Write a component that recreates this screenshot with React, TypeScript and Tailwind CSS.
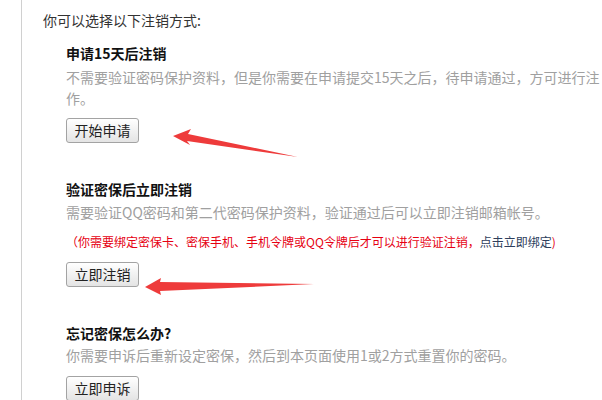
import React from "react";

const font = { fontFamily: '"Noto Sans CJK SC", "Noto Sans", sans-serif' };

function Btn({ children }: { children: React.ReactNode }) {
  return (
    <button className="w-[73px] h-[25px] border border-[#a3a3a3] rounded-[3px] bg-gradient-to-b from-[#ffffff] to-[#e4e4e4] text-[14px] leading-[23px] text-[#222] flex items-center justify-center">
      {children}
    </button>
  );
}

export default function App() {
  return (
    <div className="relative w-[602px] h-[400px] overflow-hidden bg-white" style={font}>
      <div className="ml-[21px] h-full border-l border-[#d0d0d0] pl-[21px] pt-[10px]">
        <div className="text-[14px] leading-[20px] text-[#333]">你可以选择以下注销方式:</div>

        <div className="pl-[23px] pt-[13px]">
          <div className="text-[14px] leading-[20px] font-bold text-[#111]">申请15天后注销</div>
          <div className="mt-[4px] text-[14px] leading-[21px] text-[#a0a0a0] pr-[2px]">
            不需要验证密码保护资料，但是你需要在申请提交15天之后，待申请通过，方可进行注作。
          </div>
          <div className="mt-[9px]">
            <Btn>开始申请</Btn>
          </div>

          <div className="mt-[36px] text-[14px] leading-[20px] font-bold text-[#111]">验证密保后立即注销</div>
          <div className="mt-[3px] text-[14px] leading-[21px] text-[#a0a0a0]">
            需要验证QQ密码和第二代密码保护资料，验证通过后可以立即注销邮箱帐号。
          </div>
          <div className="mt-[10px] text-[12px] leading-[18px] text-[#e60012]">
            （你需要绑定密保卡、密保手机、手机令牌或QQ令牌后才可以进行验证注销，
            <span className="text-[#2e3e5c]">点击立即绑定</span>)
          </div>
          <div className="mt-[11px]">
            <Btn>立即注销</Btn>
          </div>

          <div className="mt-[36px] text-[14px] leading-[20px] font-bold text-[#111]">忘记密保怎么办?</div>
          <div className="mt-[2px] text-[14px] leading-[21px] text-[#a0a0a0]">
            你需要申诉后重新设定密保，然后到本页面使用1或2方式重置你的密码。
          </div>
          <div className="mt-[10px]">
            <Btn>立即申诉</Btn>
          </div>
        </div>
      </div>

      <svg className="absolute inset-0 pointer-events-none" width="602" height="400" viewBox="0 0 602 400">
        <polygon
          points="173,136 191,129 188,134 298,157 187,141 190,145"
          fill="#ee3b3b"
        />
        <polygon
          points="145,287 161,278 160,282 314,284 160,291 161,295"
          fill="#ee3b3b"
        />
      </svg>
    </div>
  );
}
